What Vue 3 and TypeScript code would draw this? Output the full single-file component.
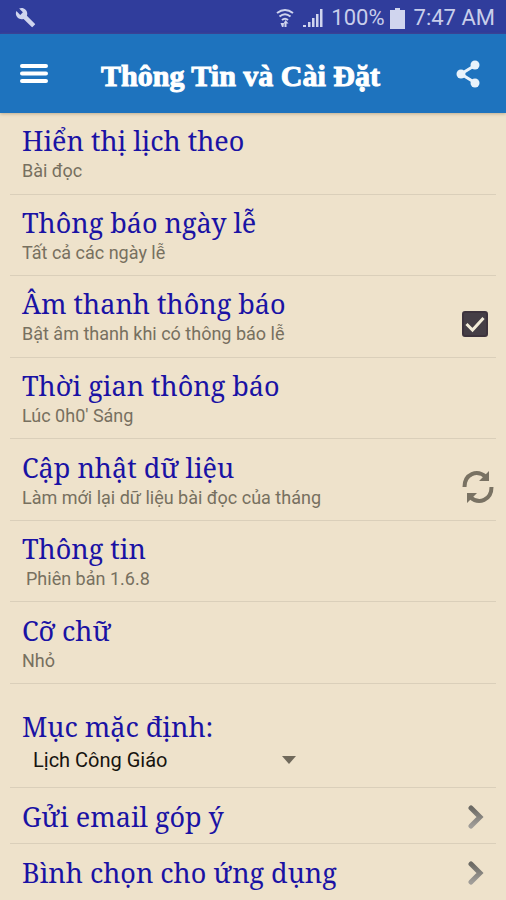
<script setup lang="ts">
import { ref } from 'vue'

interface Setting {
  title: string
  detail: string
  control?: 'check' | 'refresh'
  indented?: boolean
}

const settings: Setting[] = [
  { title: 'Hiển thị lịch theo', detail: 'Bài đọc' },
  { title: 'Thông báo ngày lễ', detail: 'Tất cả các ngày lễ' },
  { title: 'Âm thanh thông báo', detail: 'Bật âm thanh khi có thông báo lễ', control: 'check' },
  { title: 'Thời gian thông báo', detail: "Lúc 0h0' Sáng" },
  { title: 'Cập nhật dữ liệu', detail: 'Làm mới lại dữ liệu bài đọc của tháng', control: 'refresh' },
  { title: 'Thông tin', detail: 'Phiên bản 1.6.8', indented: true },
  { title: 'Cỡ chữ', detail: 'Nhỏ' },
]

const links: string[] = ['Gửi email góp ý', 'Bình chọn cho ứng dụng']

const soundOn = ref(true)
const section = ref('Lịch Công Giáo')
</script>

<template>
  <div class="screen">
    <div class="status">
      <svg class="wrench" viewBox="0 0 24 24" aria-hidden="true">
        <path d="M22.7 19l-9.1-9.1c.9-2.3.4-5-1.500-6.900-2-2-5-2.400-7.400-1.300L9 6 6 9 1.600 4.700C.4 7.100.9 10.100 2.900 12.100c1.900 1.900 4.600 2.400 6.900 1.500l9.100 9.100c.4.4 1 .4 1.400 0l2.300-2.300c.5-.4.5-1.100.1-1.400z" />
      </svg>
      <div class="status-right">
        <svg class="wifi" viewBox="0 0 18 20" aria-hidden="true">
          <path d="M1 5Q9-1 17 5M3.500 8.500Q9 4 14.500 8.500M6 12Q9 9.500 12 12" />
          <path class="solid" d="M9.500 12l3 3.500h-2V19h-2v-3.500h-1zM4.500 15h3.500l-.5 4H6z" />
        </svg>
        <svg class="signal" viewBox="0 0 20 20" aria-hidden="true">
          <path d="M0 19v-2h3v2zM5 19v-5h2.500v5zM9 19v-9h2.500v9zM13 19V6h2.500v13zM17 19V1h2.500v18z" />
        </svg>
        <span>100%</span>
        <svg class="battery" viewBox="0 0 15 21" aria-hidden="true">
          <path d="M5 0h5v2h5v19H0V2h5z" />
        </svg>
        <span class="time">7:47 AM</span>
      </div>
    </div>

    <header class="bar">
      <button class="icon-button" type="button" aria-label="Menu">
        <svg class="menu" viewBox="0 0 28 20" aria-hidden="true">
          <path d="M2 2h24M2 9.500h24M2 17h24" />
        </svg>
      </button>
      <h1>Thông Tin và Cài Đặt</h1>
      <button class="icon-button" type="button" aria-label="Chia sẻ">
        <svg class="share" viewBox="0 0 24 28" aria-hidden="true">
          <path d="M19.500 5L5 14l14.500 9" />
          <circle cx="19" cy="5" r="4.500" />
          <circle cx="5" cy="14" r="4.500" />
          <circle cx="19" cy="23" r="4.500" />
        </svg>
      </button>
    </header>

    <main>
      <div class="settings">
        <div v-for="item in settings" :key="item.title" class="row">
          <label v-if="item.control === 'check'" class="text" for="sound">
            <span class="title">{{ item.title }}</span>
            <span class="detail">{{ item.detail }}</span>
          </label>
          <button v-else class="text" type="button">
            <span class="title">{{ item.title }}</span>
            <span class="detail" :class="{ indented: item.indented }">{{ item.detail }}</span>
          </button>
          <span v-if="item.control === 'check'" class="check">
            <input id="sound" v-model="soundOn" type="checkbox" />
            <svg v-if="soundOn" viewBox="0 0 26 26" aria-hidden="true">
              <path d="M4.500 13l6 6L21.500 7" />
            </svg>
          </span>
          <button v-if="item.control === 'refresh'" class="icon-button" type="button" aria-label="Cập nhật">
            <svg class="refresh" viewBox="0 0 32 34" aria-hidden="true">
              <path class="arc" d="M2.500 17C2.500 4 15-1 24 7M29.500 17C29.500 30 17 35 8 27" />
              <path d="M27 1v10H17zM5 33V23h10z" />
            </svg>
          </button>
        </div>
      </div>

      <div class="row section">
        <label class="title" for="section">Mục mặc định:</label>
        <div class="picker">
          <select id="section" v-model="section">
            <option>Lịch Công Giáo</option>
          </select>
          <svg viewBox="0 0 14 8" aria-hidden="true"><path d="M0 0h14L7 8z" /></svg>
        </div>
      </div>

      <a v-for="(link, index) in links" :key="link" class="row link" href="#">
        <span class="title">{{ link }}</span>
        <svg viewBox="0 0 16 24" aria-hidden="true">
          <defs>
            <linearGradient :id="`chevron-${index}`" x1="0" y1="0" x2="0" y2="1">
              <stop offset="0" stop-color="#6c6a64" />
              <stop offset="1" stop-color="#a09d98" />
            </linearGradient>
          </defs>
          <path d="M3 3l9 9-9 9" :stroke="`url(#chevron-${index})`" />
        </svg>
      </a>
    </main>
  </div>
</template>

<style>
body {
  margin: 0;
  background: #eee2cb;
}
</style>

<style scoped>
.screen {
  min-height: 100vh;
  display: flex;
  flex-direction: column;
  background: #eee2cb;
  font-family: Roboto, "Liberation Sans", sans-serif;
}

button {
  padding: 0;
  border: 0;
  background: none;
  font: inherit;
  text-align: left;
}

svg {
  display: block;
}

.status {
  flex: none;
  height: 34px;
  padding: 0 11px 0 15px;
  display: flex;
  align-items: center;
  justify-content: space-between;
  background: #303d9c;
  color: #c8ceeb;
  font-size: 22px;
  line-height: 34px;
}

.status svg {
  fill: #d0d5ee;
}

.wrench {
  width: 21px;
  height: 21px;
}

.status-right {
  padding-top: 2px;
  display: flex;
  align-items: center;
}

.wifi {
  width: 18px;
  height: 20px;
  margin-right: 9px;
}

.wifi path {
  fill: none;
  stroke: #d0d5ee;
  stroke-width: 2;
}

.wifi .solid {
  fill: #d0d5ee;
  stroke: none;
}

.signal {
  width: 20px;
  height: 20px;
  margin-right: 8px;
}

.battery {
  width: 15px;
  height: 21px;
  margin: 0 9px 0 5px;
}

.bar {
  position: relative;
  flex: none;
  height: 79px;
  padding: 0 26px 0 20px;
  display: flex;
  align-items: center;
  background: #1e73be;
  box-shadow: 0 1px 3px #9a826088;
}

.bar h1 {
  flex: 1;
  margin: 0;
  padding: 4px 0 0 53px;
  color: #fff;
  font: bold 30px/36px "Liberation Serif", serif;
  -webkit-text-stroke: 1px #fff;
}

.menu {
  width: 28px;
  height: 20px;
  stroke: #fff;
  stroke-width: 4;
  stroke-linecap: round;
}

.share {
  width: 24px;
  height: 28px;
  fill: #e8f2fb;
}

.share path {
  fill: none;
  stroke: #e8f2fb;
  stroke-width: 3;
}

main {
  flex: none;
}

.settings {
  display: grid;
  grid-auto-rows: 1fr;
  min-height: 571px;
}

.row {
  box-sizing: border-box;
  margin: 0 10px;
  padding: 0 2px 0 12px;
  display: flex;
  align-items: center;
  border-bottom: 1px solid #dacfba;
}

.text {
  flex: 1;
  align-self: stretch;
  display: flex;
  flex-direction: column;
  justify-content: center;
}

.title {
  color: #1a12a4;
  font-family: "Noto Serif", "DejaVu Serif", serif;
  font-size: 27px;
  line-height: 34px;
  white-space: nowrap;
}

.detail {
  color: #77705f;
  font-size: 18px;
  line-height: 26px;
}

.text .title {
  padding-top: 2px;
}

.indented {
  padding-left: 4px;
}

.check {
  position: relative;
  width: 26px;
  height: 26px;
  margin: 16px 6px 0 0;
}

.check input {
  width: 26px;
  height: 26px;
  margin: 0;
  display: block;
  appearance: none;
  border: 2px solid #3d333d;
  border-radius: 3px;
}

.check input:checked {
  background: #453e46;
}

.check svg {
  position: absolute;
  inset: 0;
  fill: none;
  stroke: #f3ecd9;
  stroke-width: 3;
  pointer-events: none;
}

.refresh {
  width: 32px;
  height: 34px;
  margin-top: 14px;
  fill: #797263;
}

.refresh .arc {
  fill: none;
  stroke: #797263;
  stroke-width: 4;
}

.section {
  min-height: 104px;
  padding-top: 14px;
  flex-direction: column;
  align-items: flex-start;
  justify-content: center;
}

.picker {
  width: 58%;
  display: flex;
  align-items: center;
}

.picker select {
  flex: 1;
  padding: 0 0 0 11px;
  border: 0;
  appearance: none;
  background: none;
  color: #16140f;
  font: 20px/32px Roboto, "Liberation Sans", sans-serif;
}

.picker svg {
  width: 14px;
  height: 8px;
  fill: #70695b;
}

.link {
  min-height: 56px;
  padding-top: 2px;
  padding-right: 12px;
  justify-content: space-between;
  text-decoration: none;
}

.link:last-child {
  border-bottom: 0;
}

.link svg {
  width: 16px;
  height: 24px;
  fill: none;
  stroke-width: 5;
  stroke-linecap: round;
}
</style>
